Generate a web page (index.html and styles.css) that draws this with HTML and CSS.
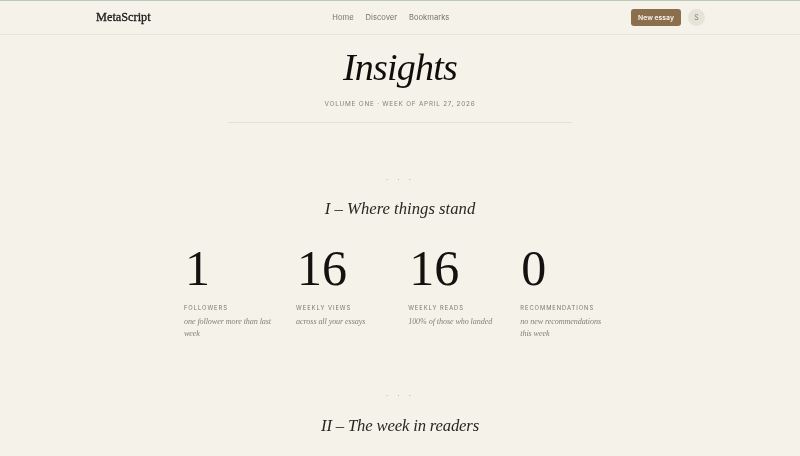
FILE: index.html
```html
<!DOCTYPE html>
<html lang="en">
<head>
<meta charset="utf-8">
<title>Insights</title>
<link rel="stylesheet" href="styles.css">
</head>
<body>
<div class="topline"></div>
<header class="site-header">
  <a class="brand">MetaScript</a>
  <nav class="nav"><a>Home</a><a>Discover</a><a>Bookmarks</a></nav>
  <div class="actions"><button class="new-essay">New essay</button><span class="avatar">S</span></div>
</header>
<main class="page">
  <section class="hero">
    <h1>Insights</h1>
    <p class="volume">VOLUME ONE · WEEK OF APRIL 27, 2026</p>
    <div class="rule"></div>
  </section>
  <section class="part">
    <div class="dots">· · ·</div>
    <h2>I – Where things stand</h2>
    <div class="stats">
      <div class="stat"><div class="num">1</div><div class="label">FOLLOWERS</div><p class="note">one follower more than last week</p></div>
      <div class="stat"><div class="num">16</div><div class="label">WEEKLY VIEWS</div><p class="note">across all your essays</p></div>
      <div class="stat"><div class="num">16</div><div class="label">WEEKLY READS</div><p class="note">100% of those who landed</p></div>
      <div class="stat"><div class="num">0</div><div class="label">RECOMMENDATIONS</div><p class="note">no new recommendations this week</p></div>
    </div>
  </section>
  <section class="part part-two">
    <div class="dots">· · ·</div>
    <h2>II – The week in readers</h2>
  </section>
</main>
</body>
</html>
```
FILE: styles.css
```css
* { box-sizing: border-box; }
html, body { margin: 0; height: 456px; overflow: hidden; }
body { background: #f5f2ea; color: #141210; font-family: "Liberation Serif", serif; }
.topline { height: 1px; background: #bccabb; }
.site-header {
  height: 34px; border-bottom: 1px solid #e8e5dc; will-change: transform;
  padding: 0 95px 0 96px; display: flex; justify-content: space-between; align-items: center;
}
.brand { margin-bottom: 1px; font-size: 12.3px; color: #1a1815; -webkit-text-stroke: 0.3px #1a1815; }
.nav { display: flex; gap: 12px; font: 7.6px "Inter", sans-serif; color: #77736a; }
.actions { display: flex; align-items: center; gap: 7px; }
.new-essay {
  height: 17px; width: 50px; padding: 0; border: 0; border-radius: 3px; background: #8b6f4c; color: #f8f5ee;
  font: 600 6.8px "Inter", sans-serif;
}
.avatar {
  width: 17px; height: 17px; border-radius: 50%; background: #e6e3d9; color: #85816f;
  display: flex; align-items: center; justify-content: center; font: 7px "Inter", sans-serif;
}
.page { display: flex; flex-direction: column; align-items: center; will-change: transform; }
.hero { display: flex; flex-direction: column; align-items: center; width: 344px; }
h1 { margin: 10px 0 0; font-size: 38px; line-height: 44px; letter-spacing: -0.8px; font-style: italic; font-weight: 400; color: #0f0e0c; }
.volume { margin: 10px 0 0; font: 6.4px/10px "Inter", sans-serif; letter-spacing: 0.76px; color: #85817a; }
.rule { margin-top: 13px; width: 344px; height: 1px; background: #e4e1d9; }
.part { width: 432px; display: flex; flex-direction: column; align-items: center; }
.dots { margin-top: 50px; height: 12px; font: 9px/12px "Liberation Serif", serif; letter-spacing: 3px; color: #a9a598; }
h2 { margin: 13px 0 0; font-size: 16.7px; line-height: 22px; font-style: italic; font-weight: 400; color: #2a2723; }
.stats { width: 100%; margin-top: 23px; display: grid; grid-template-columns: repeat(4, 88px); column-gap: 24.1px; }
.num { height: 50px; padding-left: 1px; font-size: 50px; line-height: 50px; color: #141210; }
.label { margin-top: 10px; font: 5.8px/9px "Inter", sans-serif; letter-spacing: 0.95px; color: #7a766d; }
.note { margin: 4px 0 0; font-size: 8.1px; line-height: 11.7px; letter-spacing: -0.08px; font-style: italic; color: #85817a; }
.part-two .dots { margin-top: 50px; }
.part-two h2 { margin-top: 14px; letter-spacing: -0.17px; }
```
